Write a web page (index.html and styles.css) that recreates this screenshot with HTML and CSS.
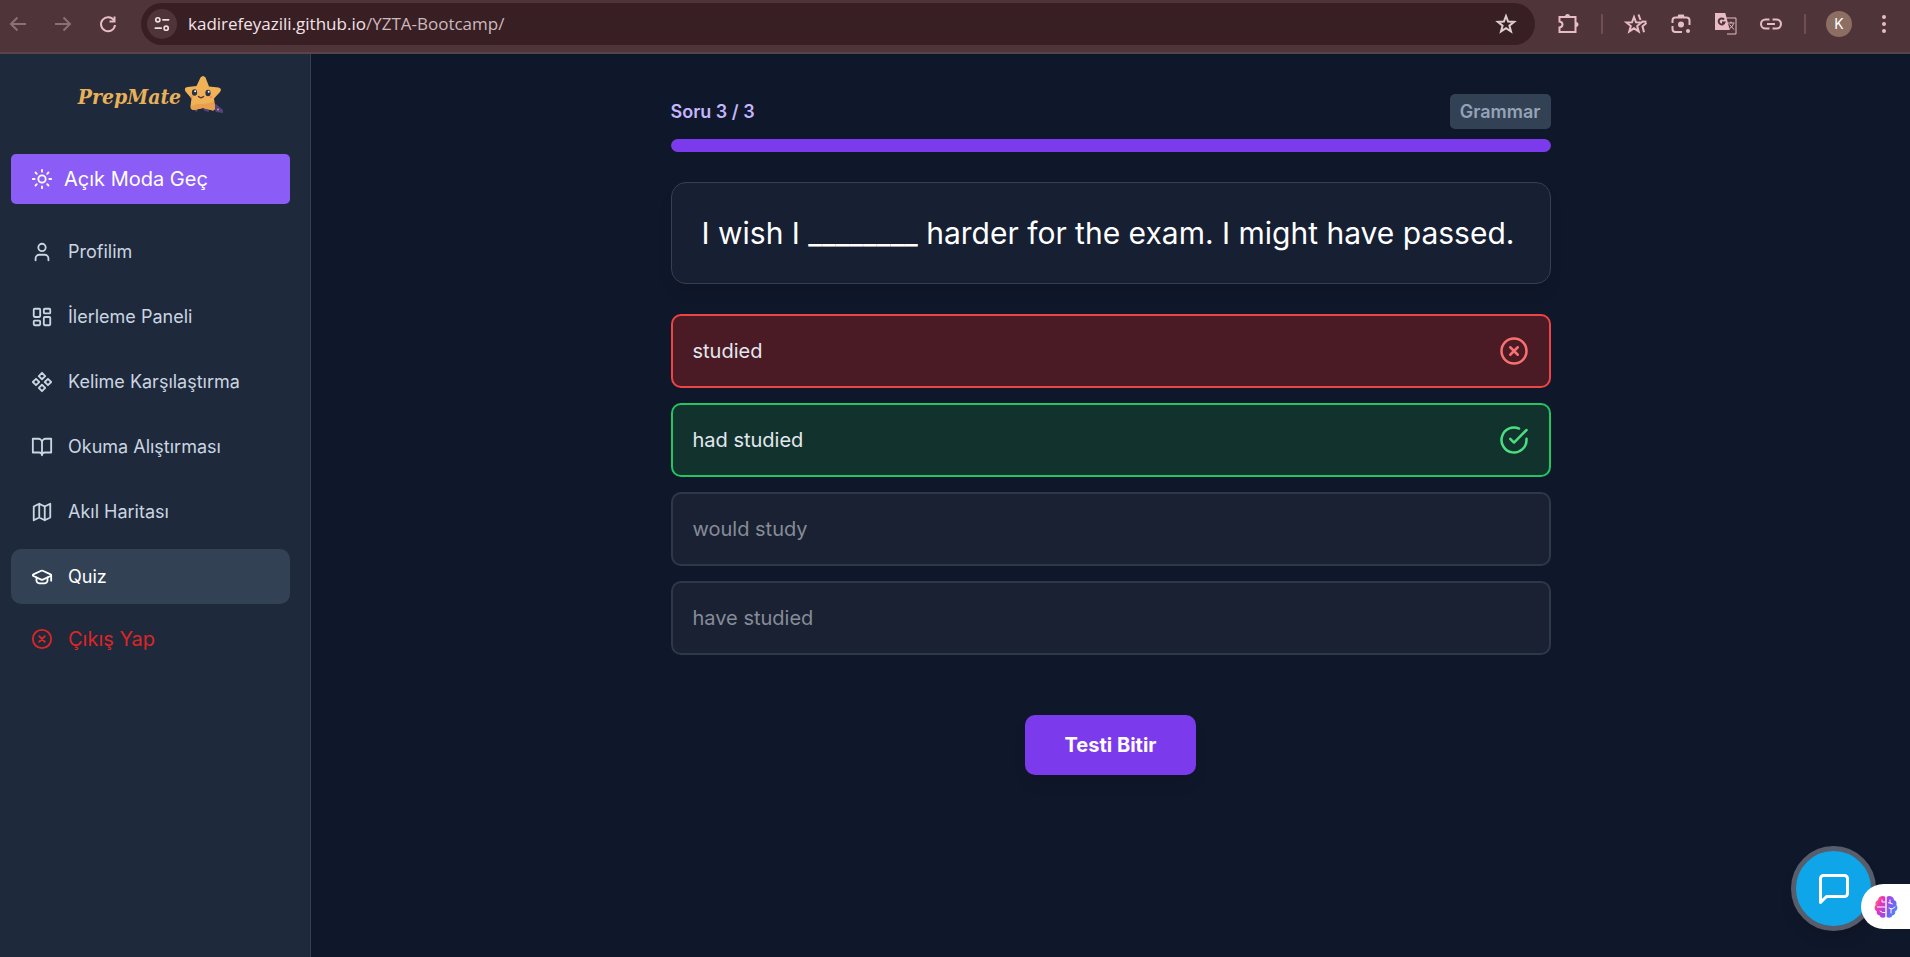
FILE: index.html
```html
<!DOCTYPE html>
<html lang="tr">
<head>
<meta charset="utf-8">
<title>PrepMate</title>
<link rel="stylesheet" href="styles.css">
</head>
<body>
<header class="toolbar">
  <nav class="history">
    <button class="tool dim" aria-label="Geri"><svg viewBox="0 0 24 24"><path d="M20 12H5M11.500 5.500 5 12l6.500 6.500"/></svg></button>
    <button class="tool dim" aria-label="İleri"><svg viewBox="0 0 24 24"><path d="M4 12h15M12.500 5.500 19 12l-6.500 6.500"/></svg></button>
    <button class="tool" aria-label="Yenile"><svg viewBox="0 0 24 24"><path d="M18 8.500A7 7 0 1 0 19 13"/><path d="M18.500 4.500v5h-5"/></svg></button>
  </nav>
  <div class="address">
    <button class="site-info" aria-label="Site bilgisi"><svg viewBox="0 0 24 24"><circle cx="7" cy="7" r="2.500"/><path d="M13 7h7M4 17h7"/><circle cx="17" cy="17" r="2.500"/></svg></button>
    <span class="url">kadirefeyazili.github.io<span class="path">/YZTA-Bootcamp/</span></span>
    <button class="tool bookmark" aria-label="Yer işareti"><svg viewBox="0 0 24 24"><path d="m12 4 2.100 5.600 6 .3-4.700 3.700 1.600 5.800L12 16.100l-5 3.300 1.600-5.800-4.700-3.700 6-.3z"/></svg></button>
  </div>
  <div class="extensions">
    <button class="tool" aria-label="Uzantılar"><svg viewBox="0 0 24 24"><path d="M3.500 5h16v15h-16v-4.500c4-.5 4-5.500 0-6z"/><path class="solid" d="M10 4.500a1.500 1.500 0 0 1 3 0zM20 11a1.500 1.500 0 0 1 0 3z"/></svg></button>
    <span class="divider"></span>
    <button class="tool" aria-label="Favoriler"><svg viewBox="0 0 24 24"><path d="m10 5 2 5.300 5.500.2-4.300 3.500 1.500 5.400-4.700-3.100-4.700 3.100L6.800 14l-4.300-3.500 5.500-.2z"/><path d="m14.500 2.500 2 5.500M22.500 11l-4 3.300 1.500 6M17.500 9.500l5 .3"/></svg></button>
    <button class="tool" aria-label="Lens"><svg viewBox="0 0 24 24"><path d="M3.500 11V8.500a3 3 0 0 1 3-3h11a3 3 0 0 1 3 3V13M3.500 14v3a3 3 0 0 0 3 3H13"/><path class="solid" d="M9.500 5l.5-1.500h4l.5 1.500z"/><circle class="solid" cx="12" cy="12.500" r="2"/><circle class="dot" cx="19" cy="19" r="2"/></svg></button>
    <button class="tool" aria-label="Çeviri"><svg viewBox="0 0 24 24"><path class="frame" d="M12 6h10v16H13"/><path class="solid" d="M2 2h8.500l4 15H2z"/><path class="ink" d="M10 7.500A3 3 0 1 0 10.500 10.500H8"/><path class="frame" d="M14 11h6.500M17 9.500V11M19.500 11.500c-.5 2-2 4-4 5M15.500 12.500l4.500 5"/></svg></button>
    <button class="tool" aria-label="Bağlantı"><svg viewBox="0 0 24 24"><path d="M10.500 7.500H6.500a4.500 4.500 0 0 0 0 9h4M13.500 7.500h4a4.500 4.500 0 0 1 0 9h-4M8 12h8"/></svg></button>
    <span class="divider"></span>
    <button class="avatar">K</button>
    <button class="tool" aria-label="Menü"><svg viewBox="0 0 24 24"><circle class="dot" cx="12" cy="5" r="2"/><circle class="dot" cx="12" cy="12" r="2"/><circle class="dot" cx="12" cy="19" r="2"/></svg></button>
  </div>
</header>

<div class="app">
  <aside class="sidebar">
    <a class="logo" href="#">
      <span class="logo-text">PrepMate</span>
      <svg class="logo-star" viewBox="0 0 40 40">
        <path d="M9 33l5-2 1 5-2 2zM20 35l5-1 1 4-4-1zM29 31l4-1 7 6v3l-7-1z" fill="#54427c"/>
        <circle cx="35" cy="35.500" r="1" fill="#c9a27a"/>
        <path d="M17.500 3.500Q20 .5 22.500 3.500L26 12.500 35.500 13.500Q39.500 14.500 37 18L31 24.500 32 33Q32 37.500 28 36L20 34 11 36Q7 36 7.500 32L8.500 24.500 2.500 17.500Q.500 13.500 4.500 13L13.500 12Z" fill="#f0b256"/>
        <path d="M8 32q8-3 12-2 6 0 11-3l1 6q0 4.500-4 3l-8-2-9 2q-3 0-3-4z" fill="#e9a04c"/>
        <ellipse cx="11.500" cy="18.500" rx="2.600" ry="3.200" fill="#283149"/><ellipse cx="25" cy="19" rx="2.600" ry="3.200" fill="#283149"/>
        <circle cx="12.200" cy="17.200" r="1" fill="#fff"/><circle cx="25.700" cy="17.700" r="1" fill="#fff"/>
        <path d="M15.500 22.500q2.500 2.500 5 0" fill="none" stroke="#5a3434" stroke-width="1.500" stroke-linecap="round"/>
        <circle cx="8.500" cy="22.500" r="1.300" fill="#ef8f5b"/><circle cx="28" cy="23" r="1.300" fill="#ef8f5b"/>
      </svg>
    </a>
    <button class="theme-toggle">
      <svg class="icon" viewBox="0 0 24 24"><circle cx="12" cy="12" r="4"/><path d="M12 2v2M12 20v2M4.930 4.930l1.410 1.410M17.660 17.660l1.410 1.410M2 12h2M20 12h2M6.340 17.660l-1.410 1.410M19.070 4.930l-1.410 1.410"/></svg>
      Açık Moda Geç
    </button>
    <nav class="menu">
      <a class="item" href="#"><svg class="icon" viewBox="0 0 24 24"><path d="M19 21v-2a4 4 0 0 0-4-4H9a4 4 0 0 0-4 4v2"/><circle cx="12" cy="7" r="4"/></svg>Profilim</a>
      <a class="item" href="#"><svg class="icon" viewBox="0 0 24 24"><rect x="3" y="3" width="7" height="9" rx="1"/><rect x="14" y="3" width="7" height="5" rx="1"/><rect x="14" y="12" width="7" height="9" rx="1"/><rect x="3" y="16" width="7" height="5" rx="1"/></svg>İlerleme Paneli</a>
      <a class="item" href="#"><svg class="icon" viewBox="0 0 24 24"><path d="M5.500 8.500 9 12l-3.500 3.500L2 12zM12 2l3.500 3.500L12 9 8.500 5.500zM18.500 8.500 22 12l-3.500 3.500L15 12zM12 15l3.500 3.500L12 22l-3.500-3.500z"/></svg>Kelime Karşılaştırma</a>
      <a class="item" href="#"><svg class="icon" viewBox="0 0 24 24"><path d="M2 3h6a4 4 0 0 1 4 4v14a3 3 0 0 0-3-3H2zM22 3h-6a4 4 0 0 0-4 4v14a3 3 0 0 1 3-3h7z"/></svg>Okuma Alıştırması</a>
      <a class="item" href="#"><svg class="icon" viewBox="0 0 24 24"><path d="m3 6 6-3 6 3 6-3v15l-6 3-6-3-6 3zM9 3v15M15 6v15"/></svg>Akıl Haritası</a>
      <a class="item active" href="#" aria-current="page"><svg class="icon" viewBox="0 0 24 24"><path d="M21.420 10.922a1 1 0 0 0-.019-1.838L12.830 5.180a2 2 0 0 0-1.660 0L2.600 9.080a1 1 0 0 0 0 1.832l8.570 3.908a2 2 0 0 0 1.660 0z"/><path d="M22 10v6M6 12.500V16a6 3 0 0 0 12 0v-3.500"/></svg>Quiz</a>
      <button class="item logout"><svg class="icon" viewBox="0 0 24 24"><circle cx="12" cy="12" r="10"/><path d="m15 9-6 6M9 9l6 6"/></svg>Çıkış Yap</button>
    </nav>
  </aside>

  <main class="content">
    <section class="quiz">
      <div class="quiz-head"><span class="counter">Soru 3 / 3</span><span class="badge">Grammar</span></div>
      <div class="progress"><div class="progress-fill" style="width: 100%"></div></div>
      <h1 class="question">I wish I ________ harder for the exam. I might have passed.</h1>
      <div class="options">
        <button class="option wrong">studied<svg class="mark" viewBox="0 0 24 24"><circle cx="12" cy="12" r="10"/><path d="m15 9-6 6M9 9l6 6"/></svg></button>
        <button class="option right">had studied<svg class="mark" viewBox="0 0 24 24"><path d="M22 11.080V12a10 10 0 1 1-5.930-9.140"/><path d="m22 4-10 10.010-3-3"/></svg></button>
        <button class="option muted">would study</button>
        <button class="option muted">have studied</button>
      </div>
      <button class="finish">Testi Bitir</button>
    </section>
  </main>
</div>

<button class="chat" aria-label="Sohbet"><svg class="chat-icon" viewBox="0 0 24 24"><path d="M21 15a2 2 0 0 1-2 2H7l-4 4V5a2 2 0 0 1 2-2h14a2 2 0 0 1 2 2z"/></svg></button>
<button class="assistant" aria-label="Asistan">
  <svg class="brain" viewBox="0 0 24 24">
    <defs>
      <linearGradient id="lobeA" x1="0" y1="0" x2="1" y2="1"><stop offset="0" stop-color="#ff9a2e"/><stop offset=".4" stop-color="#ee35b5"/><stop offset="1" stop-color="#8a4df5"/></linearGradient>
      <linearGradient id="lobeB" x1="0" y1="0" x2="1" y2="1"><stop offset="0" stop-color="#b53fe8"/><stop offset=".5" stop-color="#7660f2"/><stop offset="1" stop-color="#2ba8fb"/></linearGradient>
    </defs>
    <path fill="url(#lobeA)" d="M11.300 2v20c-2 1.500-5 .8-5.600-1.400-2.400-.4-3.400-2.200-2.800-4.100C0 15 .2 11.500 1.600 10.300 1 7.500 2 5.500 4 5 4.200 1.500 9 0 11.300 2z"/>
    <path fill="url(#lobeB)" d="M12.700 2v20c2 1.500 5 .8 5.600-1.400 2.400-.4 3.400-2.200 2.800-4.100 2.900-1.500 2.700-5 1.300-6.200.6-2.800-.4-4.800-2.400-5.300C19.800 1.500 15 0 12.700 2z"/>
    <path class="fold" d="M11 12H3.500M11 7H8V5M11 17.500H8.500L6 16M16 5v3l2.500 1M14.500 7.800 16 8M15 13l3 1 3-2M17 18v-4"/>
  </svg>
</button>
</body>
</html>
```
FILE: styles.css
```css
* { box-sizing: border-box; }
body {
  margin: 0;
  min-height: 100vh;
  display: flex;
  flex-direction: column;
  background: #0f172a;
  color: #e2e8f0;
  font-family: Inter, "Noto Sans", sans-serif;
  font-size: 18px;
  line-height: 27px;
}
button { margin: 0; padding: 0; border: 0; background: none; color: inherit; font: inherit; cursor: pointer; }
a { color: inherit; text-decoration: none; }
svg { display: block; flex: none; fill: none; stroke: currentColor; stroke-width: 2; stroke-linecap: round; stroke-linejoin: round; }

.toolbar {
  display: flex;
  align-items: center;
  height: 54px;
  padding: 0 13px 5px 5px;
  background: #4f353a;
  border-bottom: 2px solid #5b4448;
  color: #e8bcc6;
}
.history, .extensions { display: flex; align-items: center; gap: 19px; }
.history { margin-right: 20px; }
.extensions { margin-left: 20px; }
.tool { display: grid; place-items: center; width: 26px; height: 26px; }
.tool svg { width: 24px; height: 24px; stroke-linecap: butt; stroke-linejoin: miter; }
.dim { color: #8b7075; }
.solid { fill: currentColor; }
.ink { stroke: #4f353a; }
.frame { stroke-width: 1; }
.dot { fill: currentColor; stroke: none; }
.address {
  flex: 1;
  display: flex;
  align-items: center;
  height: 42px;
  padding: 0 16px 0 6px;
  border-radius: 21px;
  background: #381f24;
}
.site-info { display: grid; place-items: center; width: 30px; height: 30px; border-radius: 15px; background: #4f353a; color: #f0dfe2; }
.site-info svg { width: 20px; height: 20px; }
.url { flex: 1; margin-left: 11px; font-family: "Open Sans", "Noto Sans", sans-serif; font-size: 17px; color: #f3e3e6; }
.path { color: #cdb9bc; }
.bookmark { color: #dccdd0; }
.divider { width: 2px; height: 20px; margin: 0 1px; background: #6f4d54; }
.avatar { width: 26px; height: 26px; border-radius: 50%; background: #8d6e63; color: #fff; font-size: 14px; line-height: 26px; }

.app { flex: 1; display: flex; }
.sidebar {
  flex: none;
  width: 311px;
  padding: 20px 20px 20px 11px;
  background: #1e293b;
  border-right: 1px solid #334155;
}
.logo { display: flex; align-items: center; justify-content: center; gap: 2px; margin-bottom: 40px; }
.logo-text { padding-top: 5px; font-family: "DejaVu Serif Condensed", "DejaVu Serif", serif; font-style: italic; font-weight: 700; font-size: 21px; color: #e8b059; }
.logo-star { width: 40px; height: 40px; stroke: none; }
.theme-toggle {
  display: flex;
  align-items: center;
  gap: 11px;
  width: 100%;
  height: 50px;
  padding: 0 20px;
  border-radius: 5px;
  background: #8b5cf6;
  color: #fff;
  font-size: 20px;
}
.icon { width: 22px; height: 22px; }
.menu { display: flex; flex-direction: column; gap: 10px; margin-top: 20px; }
.item {
  display: flex;
  align-items: center;
  gap: 15px;
  height: 55px;
  padding: 0 20px;
  border-radius: 10px;
  color: #cbd5e1;
}
.active { background: #334155; color: #fff; }
.logout { height: 50px; color: #dc2626; font-size: 20px; }

.content { flex: 1; padding: 40px 20px; }
.quiz { max-width: 880px; margin: 0 auto; display: flex; flex-direction: column; }
.quiz-head { display: flex; align-items: center; justify-content: space-between; font-weight: 600; }
.counter { color: #c4b5fd; }
.badge { padding: 4px 10px; border-radius: 5px; background: #334155; color: #94a3b8; }
.progress { height: 13px; margin-top: 10px; border-radius: 7px; background: #334155; overflow: hidden; }
.progress-fill { height: 100%; border-radius: 7px; background: #7c3aed; }
.question {
  margin: 30px 0;
  padding: 30px;
  border: 1px solid #334155;
  border-radius: 15px;
  background: #162032;
  box-shadow: 0 10px 15px -3px rgba(0, 0, 0, .1);
  color: #fff;
  font-size: 30px;
  font-weight: 400;
  line-height: 40px;
}
.options { display: flex; flex-direction: column; gap: 15px; }
.option {
  display: flex;
  align-items: center;
  justify-content: space-between;
  height: 74px;
  padding: 0 20px;
  border: 2px solid #334155;
  border-radius: 10px;
  background: #1e293b;
  color: #e2e8f0;
  font-size: 20px;
  text-align: left;
}
.wrong { border-color: #ef4444; background: #4a1b24; }
.wrong .mark { color: #f87171; }
.right { border-color: #22c55e; background: #12332d; }
.right .mark { color: #4ade80; }
.muted { border-color: #2d384a; background: #1a2133; color: #868c98; }
.mark { width: 30px; height: 30px; }
.finish {
  align-self: center;
  height: 60px;
  margin-top: 60px;
  padding: 0 40px;
  border-radius: 10px;
  background: #7c3aed;
  box-shadow: 0 10px 15px -3px rgba(0, 0, 0, .1);
  color: #fff;
  font-size: 20px;
  font-weight: 700;
}

.chat {
  position: fixed;
  right: 34px;
  bottom: 26px;
  display: grid;
  place-items: center;
  width: 85px;
  height: 85px;
  border: 5px solid #575d6b;
  border-radius: 50%;
  background: #0ea5e9;
  box-shadow: 0 10px 15px -3px rgba(0, 0, 0, .1);
  color: #fff;
}
.chat-icon { width: 36px; height: 36px; }
.assistant {
  position: fixed;
  right: 0;
  bottom: 28px;
  display: flex;
  align-items: center;
  width: 49px;
  height: 45px;
  padding-left: 13px;
  border-radius: 23px 0 0 23px;
  background: #fff;
}
.brain { width: 24px; height: 24px; stroke: none; }
.fold { stroke: #fff; stroke-width: 1; }
```
